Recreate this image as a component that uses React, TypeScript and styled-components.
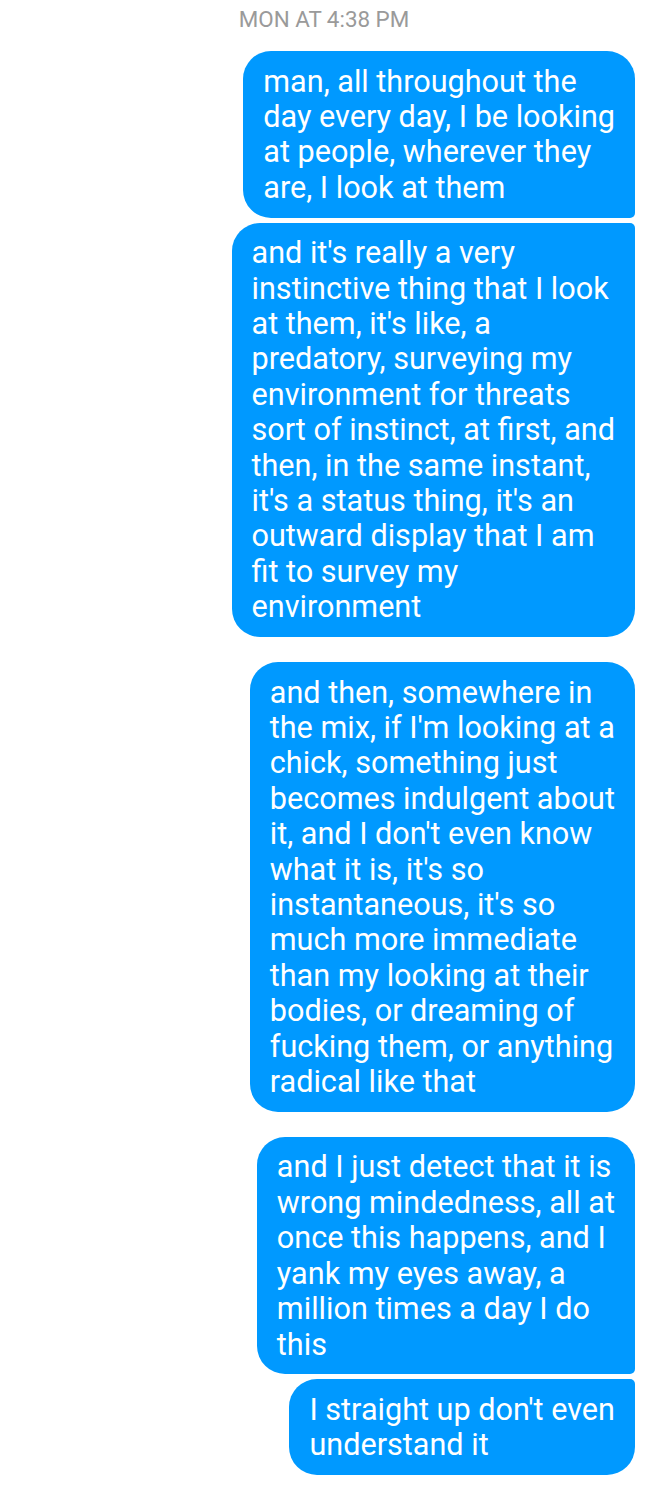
import React from "react";
import styled, { createGlobalStyle } from "styled-components";

const Global = createGlobalStyle`
  html, body { margin: 0; padding: 0; background: #ffffff; }
  body { font-family: Roboto, "Noto Sans", "Liberation Sans", sans-serif; }
`;

const Thread = styled.div`
  width: 648px;
  min-height: 1486px;
  box-sizing: border-box;
  padding-top: 5px;
  display: flex;
  flex-direction: column;
`;

const Stamp = styled.div`
  text-align: center;
  color: #9a9a9a;
  font-size: 22.4px;
  line-height: 28px;
  margin-bottom: 18px;
`;

const Group = styled.div`
  display: flex;
  flex-direction: column;
  align-items: flex-end;
  gap: 5px;
  padding-right: 13px;
  & + & { margin-top: 25px; }
`;

const Bubble = styled.div<{ $first: boolean; $last: boolean }>`
  background: #0099ff;
  color: #ffffff;
  font-size: 30.6px;
  line-height: 35.4px;
  padding: 12.5px 20px 12.5px 20px;
  white-space: pre;
  border-radius: 28px;
  border-top-right-radius: ${(p) => (p.$first ? "28px" : "5px")};
  border-bottom-right-radius: ${(p) => (p.$last ? "28px" : "5px")};
`;

const groups: string[][][] = [
  [
    [
      "man, all throughout the",
      "day every day, I be looking",
      "at people, wherever they",
      "are, I look at them",
    ],
    [
      "and it's really a very",
      "instinctive thing that I look",
      "at them, it's like, a",
      "predatory, surveying my",
      "environment for threats",
      "sort of instinct, at first, and",
      "then, in the same instant,",
      "it's a status thing, it's an",
      "outward display that I am",
      "fit to survey my",
      "environment",
    ],
  ],
  [
    [
      "and then, somewhere in",
      "the mix, if I'm looking at a",
      "chick, something just",
      "becomes indulgent about",
      "it, and I don't even know",
      "what it is, it's so",
      "instantaneous, it's so",
      "much more immediate",
      "than my looking at their",
      "bodies, or dreaming of",
      "fucking them, or anything",
      "radical like that",
    ],
  ],
  [
    [
      "and I just detect that it is",
      "wrong mindedness, all at",
      "once this happens, and I",
      "yank my eyes away, a",
      "million times a day I do",
      "this",
    ],
    ["I straight up don't even", "understand it"],
  ],
];

export default function App() {
  return (
    <>
      <Global />
      <Thread>
        <Stamp>MON AT 4:38 PM</Stamp>
        {groups.map((g, gi) => (
          <Group key={gi}>
            {g.map((lines, bi) => (
              <Bubble key={bi} $first={bi === 0} $last={bi === g.length - 1}>
                {lines.join("\n")}
              </Bubble>
            ))}
          </Group>
        ))}
      </Thread>
    </>
  );
}
